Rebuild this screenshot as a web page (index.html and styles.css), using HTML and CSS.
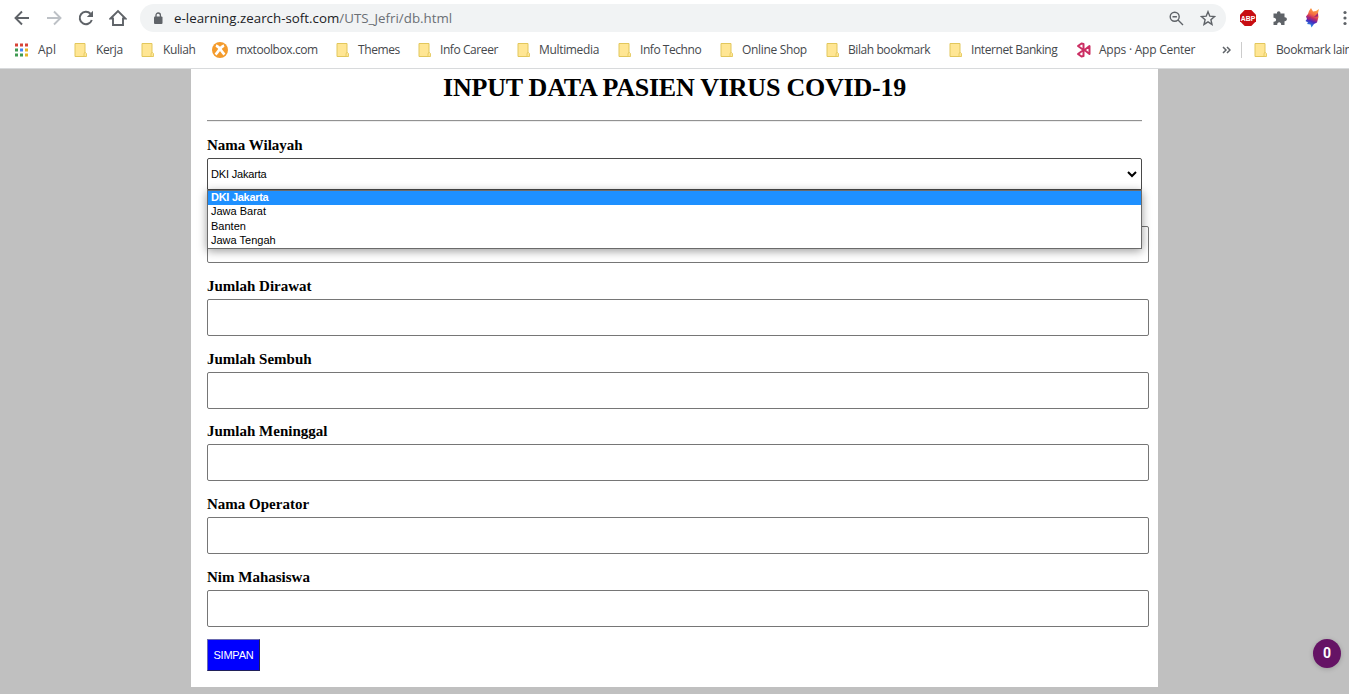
FILE: index.html
```html
<!DOCTYPE html>
<html lang="id">
<head>
<meta charset="utf-8">
<title>db.html</title>
<link rel="stylesheet" href="styles.css">
</head>
<body>
<svg class="defs" width="0" height="0">
  <symbol id="folder" viewBox="0 0 14 16"><path d="M1 1.500h10v9.800l1 .7v2.500H1z" fill="#ffe694" stroke="#e2c75c"/><path d="M10 14.500v-3.200l1.500-.8 1 1v3z" fill="#ffe694" stroke="#e2c75c" stroke-width=".8"/></symbol>
</svg>
<header class="browser">
  <div class="toolbar">
    <nav class="nav">
      <svg width="16" height="16" viewBox="0 0 16 16"><path d="M15 8H2M8 1.500 1.500 8 8 14.500" fill="none" stroke="#5f6368" stroke-width="1.900"/></svg>
      <svg width="16" height="16" viewBox="0 0 16 16"><path d="M1 8h13M8 1.500 14.500 8 8 14.500" fill="none" stroke="#bdc1c6" stroke-width="1.900"/></svg>
      <svg width="16" height="16" viewBox="0 0 16 16"><path d="M13.800 10A6.200 6.200 0 1 1 12.500 3.700" fill="none" stroke="#5f6368" stroke-width="2"/><path d="M15 .8v6.200H8.800z" fill="#5f6368"/></svg>
      <svg width="18" height="18" viewBox="0 0 18 18"><path d="M1.500 9.500 9 2l7.500 7.500H14V16H4V9.500z" fill="none" stroke="#5f6368" stroke-width="1.900"/></svg>
    </nav>
    <div class="omnibox">
      <svg class="lock" width="10" height="13" viewBox="0 0 10 13"><rect x="1" y="4.500" width="8.500" height="7.500" rx="1" fill="#5f6368"/><path d="M3 5V3.200a2.200 2.200 0 0 1 4.400 0V5" fill="none" stroke="#5f6368" stroke-width="1.300"/></svg>
      <span class="url">e-learning.zearch-soft.com<span class="path">/UTS_Jefri/db.html</span></span>
      <svg class="zoom" width="15" height="15" viewBox="0 0 15 15"><g fill="none" stroke="#5f6368" stroke-width="1.400"><circle cx="5.700" cy="5.700" r="4.500"/><path d="M9 9l5 5M3.500 5.700h4.400"/></g></svg>
      <svg width="16" height="16" viewBox="0 0 16 16"><path d="M8 1.700l1.800 4.500 4.700.4-3.600 3.100 1.100 4.700L8 11.900l-4 2.500 1.100-4.700L1.500 6.600l4.700-.4z" fill="none" stroke="#5f6368" stroke-width="1.400"/></svg>
    </div>
    <svg class="abp" width="16" height="16" viewBox="0 0 16 16"><path d="M4.700 0h6.600L16 4.700v6.600L11.300 16H4.700L0 11.300V4.700z" fill="#c70d12"/><text x="8" y="11" text-anchor="middle" textLength="14.500" lengthAdjust="spacingAndGlyphs" class="abp-text">ABP</text></svg>
    <svg class="puzzle" width="16" height="16" viewBox="0 0 16 16"><path d="M1.500 3.500H5C4.500.8 8.800.3 8.500 3.500h4v3.800c3.200-.3 3.200 4.200 0 3.900V15H9.200c.2-3.700-4.200-3.700-4 0H1.500v-3.300C5 12 5 7.400 1.500 7.700z" fill="#5f6368"/></svg>
    <svg class="fox" width="15" height="20" viewBox="0 0 15 20"><defs><linearGradient id="fg" x1=".7" y1="0" x2=".4" y2="1"><stop offset="0" stop-color="#ffad45"/><stop offset=".35" stop-color="#f36b42"/><stop offset=".52" stop-color="#c62c65"/><stop offset=".7" stop-color="#4a28bd"/><stop offset="1" stop-color="#19a4ed"/></linearGradient></defs><path d="M6 0l2 3.500 3-.5 3-2-1 4 .5 4L12 14.500l-3 1.500-2.500 3.500-1-3L2 16l1-1.500L.5 13 2 11 1 8.500l2-2.500L4 3z" fill="url(#fg)"/><path d="M13 5l-4 4 4-.5M2 10.500l4-2L4 12z" fill="#a52375"/></svg>
    <svg class="dots" width="4" height="16" viewBox="0 0 4 16" fill="#5f6368"><circle cx="2" cy="2.500" r="1.600"/><circle cx="2" cy="8" r="1.600"/><circle cx="2" cy="13.500" r="1.600"/></svg>
  </div>
  <div class="bookmarks">
    <div class="bm apl"><svg width="14" height="16" viewBox="0 0 14 16"><path d="M0 1.500h3v3H0zM5 1.500h3v3H5zM10 1.500h3v3h-3z" fill="#d84437"/><path d="M0 6.500h3v3H0z" fill="#3f9b52"/><path d="M5 6.500h3v3H5z" fill="#4285f4"/><path d="M10 6.500h3v3h-3zM10 11.500h3v3h-3z" fill="#e7b525"/><path d="M0 11.500h3v3H0zM5 11.500h3v3H5z" fill="#3f9b52"/></svg><span>Apl</span></div>
    <div class="bm kerja"><svg width="14" height="16"><use href="#folder"/></svg><span>Kerja</span></div>
    <div class="bm kuliah"><svg width="14" height="16"><use href="#folder"/></svg><span>Kuliah</span></div>
    <div class="bm mx"><svg width="16" height="16" viewBox="0 0 16 16"><circle cx="8" cy="8" r="8" fill="#f49b2c"/><path d="M4 3.500c4 1.500 5 6 8.500 9M12 3.500c-4 1.500-5 6-8.500 9" fill="none" stroke="#fff" stroke-width="2.700"/></svg><span>mxtoolbox.com</span></div>
    <div class="bm themes"><svg width="14" height="16"><use href="#folder"/></svg><span>Themes</span></div>
    <div class="bm career"><svg width="14" height="16"><use href="#folder"/></svg><span>Info Career</span></div>
    <div class="bm multi"><svg width="14" height="16"><use href="#folder"/></svg><span>Multimedia</span></div>
    <div class="bm techno"><svg width="14" height="16"><use href="#folder"/></svg><span>Info Techno</span></div>
    <div class="bm shop"><svg width="14" height="16"><use href="#folder"/></svg><span>Online Shop</span></div>
    <div class="bm bilah"><svg width="14" height="16"><use href="#folder"/></svg><span>Bilah bookmark</span></div>
    <div class="bm bank"><svg width="14" height="16"><use href="#folder"/></svg><span>Internet Banking</span></div>
    <div class="bm apps"><svg width="15" height="16" viewBox="0 0 15 16"><g fill="none" stroke="#cb2e63" stroke-width="2" stroke-linejoin="round"><path d="M7.500 7V2L5.500 1.500 2 4l5.500 4L2 12l3.500 2.500 2-.5V9M8.500 8 13.500 4v8z"/></g></svg><span>Apps · App Center</span></div>
    <svg class="more" width="9" height="8" viewBox="0 0 9 8"><path d="M1 1l3 3-3 3M5 1l3 3-3 3" fill="none" stroke="#5f6368" stroke-width="1.500"/></svg>
    <div class="divider"></div>
    <div class="bm other"><svg width="14" height="16"><use href="#folder"/></svg><span>Bookmark lain</span></div>
  </div>
</header>
<main class="page">
  <section class="card">
    <h1><span>INPUT DATA PASIEN VIRUS COVID-19</span></h1>
    <hr>
    <form class="form">
      <div class="field picker">
        <label>Nama Wilayah</label>
        <div class="select"><span>DKI Jakarta</span><svg width="10" height="7" viewBox="0 0 10 7"><path d="M1 1l4 4 4-4" fill="none" stroke="#000" stroke-width="2"/></svg></div>
        <ul class="options">
          <li class="selected">DKI Jakarta</li><li>Jawa Barat</li><li>Banten</li><li>Jawa Tengah</li>
        </ul>
      </div>
      <div class="field"><label></label><input type="text"></div>
      <div class="field"><label>Jumlah Dirawat</label><input type="text"></div>
      <div class="field"><label>Jumlah Sembuh</label><input type="text"></div>
      <div class="field"><label>Jumlah Meninggal</label><input type="text"></div>
      <div class="field"><label>Nama Operator</label><input type="text"></div>
      <div class="field"><label>Nim Mahasiswa</label><input type="text"></div>
      <button class="save" type="button">SIMPAN</button>
    </form>
  </section>
  <div class="badge">0</div>
</main>
</body>
</html>
```
FILE: styles.css
```css
* { box-sizing: border-box; }
body { margin: 0; width: 1349px; height: 694px; overflow: hidden; display: flex; flex-direction: column; background: #c0c0c0; }
svg { display: block; flex: none; }
.defs { position: absolute; }
.browser { height: 69px; flex: none; background: #fff; border-bottom: 1px solid #d8dadc; font-family: "Open Sans", "Noto Sans", sans-serif; overflow: hidden; }
.toolbar { height: 36px; display: flex; align-items: center; padding-left: 14px; }
.nav { display: flex; align-items: center; gap: 16px; width: 126px; }
.nav svg:last-child { margin-left: -1px; }
.omnibox { width: 1086px; height: 28px; border-radius: 14px; background: #f1f3f4; display: flex; align-items: center; padding: 0 10px 0 13px; }
.lock { margin-right: 11px; }
.url { flex: 1; font-size: 13.3px; letter-spacing: .02px; color: #202124; white-space: nowrap; }
.path { color: #6b6f74; }
.zoom { margin-right: 16px; }
.abp { margin-left: 14px; }
.abp-text { font: bold 8px "Liberation Sans", sans-serif; fill: #fff; }
.puzzle { margin-left: 16px; }
.fox { margin-left: 17px; }
.dots { margin-left: 23px; }
.bookmarks { height: 28px; padding-left: 15px; display: grid; grid-template-columns: 59px 67px 71px 124px 82px 99px 101px 102px 106px 123px 127px 146px 19px 13px 95px; align-items: center; }
.bm { display: flex; align-items: center; gap: 8px; font-size: 12px; color: #45484c; white-space: nowrap; }
.bm span { line-height: 16px; }
.apl { gap: 9px; }
.kerja, .kuliah, .techno { letter-spacing: -.45px; }
.kerja, .kuliah { letter-spacing: -.4px; }
.mx, .career, .themes, .bilah, .bank { letter-spacing: -.42px; }
.multi, .shop { letter-spacing: -.33px; }
.apps { letter-spacing: -.24px; }
.other { letter-spacing: -.4px; }
.divider { width: 1px; height: 16px; background: #ccc; }
.page { flex: 1; display: flex; justify-content: center; align-items: flex-start; position: relative; }
.card { width: 967px; height: 618px; background: #fff; padding: 0 16px; }
h1 { margin: 0; height: 51px; padding-top: 3px; font: bold 26px/32px "Liberation Serif", serif; letter-spacing: -.22px; text-align: center; white-space: nowrap; }
hr { margin: 0; height: 2px; border: 0; border-top: 1px solid #929292; border-bottom: 1px solid #eee; }
.form { padding-top: 14px; display: flex; flex-direction: column; align-items: flex-start; gap: 13.800px; font-family: "Liberation Sans", sans-serif; }
.field { display: flex; flex-direction: column; position: relative; }
.picker { margin-bottom: .2px; }
label { height: 22px; font: bold 15px/18px "Liberation Serif", serif; white-space: nowrap; }
input { width: 942px; height: 37px; border: 1px solid #767676; border-radius: 2px; }
.select { width: 935px; height: 32px; border: 1px solid #4a4a4a; border-radius: 2px 2px 0 0; padding: 0 4px 0 3px; display: flex; align-items: center; justify-content: space-between; font-size: 11px; letter-spacing: -.18px; }
.options { position: absolute; z-index: 1; left: 0; top: 54px; width: 935px; height: 59px; margin: 0; padding: 0; list-style: none; background: #fff; border: 1px solid #6b6b6b; box-shadow: 0 2px 9px rgba(0,0,0,.4); font-size: 11px; }
.options li { height: 14.300px; line-height: 12px; padding-left: 3px; }
.options .selected { background: #1e90ff; color: #fff; font-weight: bold; letter-spacing: -.28px; }
.save { margin-top: -2px; width: 53px; height: 32px; padding: 0; border: 1px solid; border-color: #6a6ab0 #20205a #20205a #6a6ab0; background: #00f; color: #fff; font: 11px "Liberation Sans", sans-serif; letter-spacing: -.2px; }
.badge { position: absolute; left: 1313px; top: 570px; width: 28px; height: 29px; border-radius: 50%; background: #651365; color: #fff; font: bold 14px/28px "Liberation Sans Narrow", Roboto, sans-serif; text-align: center; box-shadow: 0 1px 5px rgba(0,0,0,.2); }
```
